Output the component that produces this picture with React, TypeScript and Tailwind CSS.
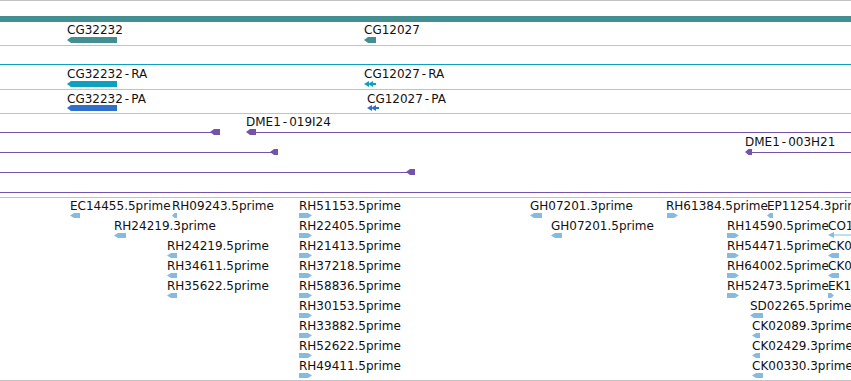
import React from "react";

type Dir = "l" | "r";

function Arrow({ x, y, w, h, dir, color }: { x: number; y: number; w: number; h: number; dir: Dir; color: string }) {
  const tip = Math.min(4, w / 2);
  const pts =
    dir === "l"
      ? `0,${h / 2} ${tip},0 ${w},0 ${w},${h} ${tip},${h}`
      : `0,0 ${w - tip},0 ${w},${h / 2} ${w - tip},${h} 0,${h}`;
  return (
    <svg className="absolute" style={{ left: x, top: y }} width={w} height={h}>
      <polygon points={pts} fill={color} />
    </svg>
  );
}

function Label({ x, y, text }: { x: number; y: number; text: string }) {
  const parts = text.split("-");
  return (
    <span
      className="absolute whitespace-nowrap text-[12px] leading-[14px] text-[#111]"
      style={{ left: x, top: y }}
    >
      {parts.map((p, i) => (
        <React.Fragment key={i}>
          {i > 0 && <span className="px-[2px]">-</span>}
          {p}
        </React.Fragment>
      ))}
    </span>
  );
}

function HLine({ x, y, w, color }: { x: number; y: number; w: number; color: string }) {
  return <div className="absolute h-px" style={{ left: x, top: y, width: w, background: color }} />;
}

const TEAL = "#428e91";
const CYAN = "#0ea0bf";
const BLUE = "#3070cd";
const PURPLE = "#7453ab";
const EST = "#86bbe0";

type Est = [number, number, string, number, number, Dir];
const ests: Est[] = [
  [70, 0, "EC14455.5prime", 70, 10, "l"],
  [172, 0, "RH09243.5prime", 172, 5, "l"],
  [299, 0, "RH51153.5prime", 299, 13, "r"],
  [530, 0, "GH07201.3prime", 530, 12, "l"],
  [666, 0, "RH61384.5prime", 667, 11, "r"],
  [767, 0, "EP11254.3prime", 767, 6, "l"],
  [114, 1, "RH24219.3prime", 114, 12, "l"],
  [299, 1, "RH22405.5prime", 299, 13, "r"],
  [551, 1, "GH07201.5prime", 551, 11, "l"],
  [727, 1, "RH14590.5prime", 727, 12, "r"],
  [828, 1, "CO1", 0, 0, "l"],
  [167, 2, "RH24219.5prime", 167, 10, "l"],
  [299, 2, "RH21413.5prime", 299, 13, "r"],
  [727, 2, "RH54471.5prime", 727, 12, "r"],
  [828, 2, "CK0", 828, 11, "l"],
  [167, 3, "RH34611.5prime", 167, 10, "l"],
  [299, 3, "RH37218.5prime", 299, 13, "r"],
  [727, 3, "RH64002.5prime", 727, 12, "r"],
  [828, 3, "CK0", 828, 11, "l"],
  [167, 4, "RH35622.5prime", 167, 10, "l"],
  [299, 4, "RH58836.5prime", 299, 13, "r"],
  [727, 4, "RH52473.5prime", 727, 12, "r"],
  [828, 4, "EK1", 828, 6, "r"],
  [299, 5, "RH30153.5prime", 299, 13, "r"],
  [750, 5, "SD02265.5prime", 750, 13, "l"],
  [299, 6, "RH33882.5prime", 299, 13, "r"],
  [752, 6, "CK02089.3prime", 752, 8, "l"],
  [299, 7, "RH52622.5prime", 299, 13, "r"],
  [752, 7, "CK02429.3prime", 752, 8, "l"],
  [299, 8, "RH49411.5prime", 299, 13, "r"],
  [752, 8, "CK00330.3prime", 752, 11, "l"],
];

function DoubleChevron({ x, y, color }: { x: number; y: number; color: string }) {
  return (
    <svg className="absolute" style={{ left: x, top: y }} width={12} height={6}>
      <polygon points="0,3 5,0 5,6" fill={color} />
      <polygon points="4,3 9,0 9,6" fill={color} />
      <rect x={8} y={2} width={4} height={2} fill={color} />
    </svg>
  );
}

export default function App() {
  return (
    <div className="w-[851px] h-[381px] overflow-hidden bg-white font-['DejaVu_Sans',sans-serif] flex flex-col">
      <div className="h-px bg-[#c2c2c2]" />
      {/* Gene track */}
      <div className="relative h-[44px]">
        <div className="absolute left-0 right-0 top-[15px] h-[6px] bg-[#428e91]" />
        <Label x={67} y={22} text="CG32232" />
        <Arrow x={67} y={36} w={50} h={6} dir="l" color={TEAL} />
        <Label x={364} y={22} text="CG12027" />
        <Arrow x={364} y={36} w={12} h={6} dir="l" color={TEAL} />
      </div>
      <div className="h-px bg-[#c2c2c2]" />
      <div className="h-[18px]" />
      <div className="h-px bg-[#0ea0bf]" />
      {/* RA track */}
      <div className="relative h-[24px]">
        <Label x={67} y={2} text="CG32232-RA" />
        <Arrow x={67} y={16} w={50} h={6} dir="l" color={CYAN} />
        <Label x={364} y={2} text="CG12027-RA" />
        <DoubleChevron x={364} y={16} color={CYAN} />
      </div>
      <div className="h-px bg-[#c2c2c2]" />
      {/* PA track */}
      <div className="relative h-[23px]">
        <Label x={67} y={2} text="CG32232-PA" />
        <Arrow x={67} y={15} w={50} h={6} dir="l" color={BLUE} />
        <Label x={367} y={2} text="CG12027-PA" />
        <DoubleChevron x={367} y={15} color={BLUE} />
      </div>
      <div className="h-px bg-[#c2c2c2]" />
      {/* Clone track */}
      <div className="relative h-[83px]">
        <HLine x={0} y={18} w={214} color={PURPLE} />
        <Arrow x={210} y={15} w={10} h={6} dir="l" color={PURPLE} />
        <Label x={246} y={1} text="DME1-019I24" />
        <Arrow x={246} y={15} w={10} h={6} dir="l" color={PURPLE} />
        <HLine x={254} y={18} w={600} color={PURPLE} />
        <HLine x={0} y={38} w={272} color={PURPLE} />
        <Arrow x={270} y={35} w={8} h={6} dir="l" color={PURPLE} />
        <Label x={745} y={21} text="DME1-003H21" />
        <Arrow x={745} y={35} w={7} h={6} dir="l" color={PURPLE} />
        <HLine x={750} y={38} w={110} color={PURPLE} />
        <HLine x={0} y={58} w={408} color={PURPLE} />
        <Arrow x={406} y={55} w={9} h={6} dir="l" color={PURPLE} />
        <HLine x={0} y={78} w={851} color={PURPLE} />
      </div>
      <div className="h-px bg-[#c2c2c2]" />
      {/* EST track */}
      <div className="relative h-[182px]">
        {ests.map(([lx, row, text, gx, gw, dir], i) => (
          <React.Fragment key={i}>
            <Label x={lx} y={1 + row * 20} text={text} />
            {gw > 0 && <Arrow x={gx} y={15 + row * 20} w={gw} h={5} dir={dir} color={EST} />}
          </React.Fragment>
        ))}
        <svg className="absolute" style={{ left: 828, top: 34 }} width={24} height={6}>
          <polygon points="0,3 6,0 6,6" fill={EST} />
          <rect x={5} y={2.5} width={20} height={1} fill={EST} />
        </svg>
      </div>
      <div className="h-px bg-[#c2c2c2]" />
    </div>
  );
}
